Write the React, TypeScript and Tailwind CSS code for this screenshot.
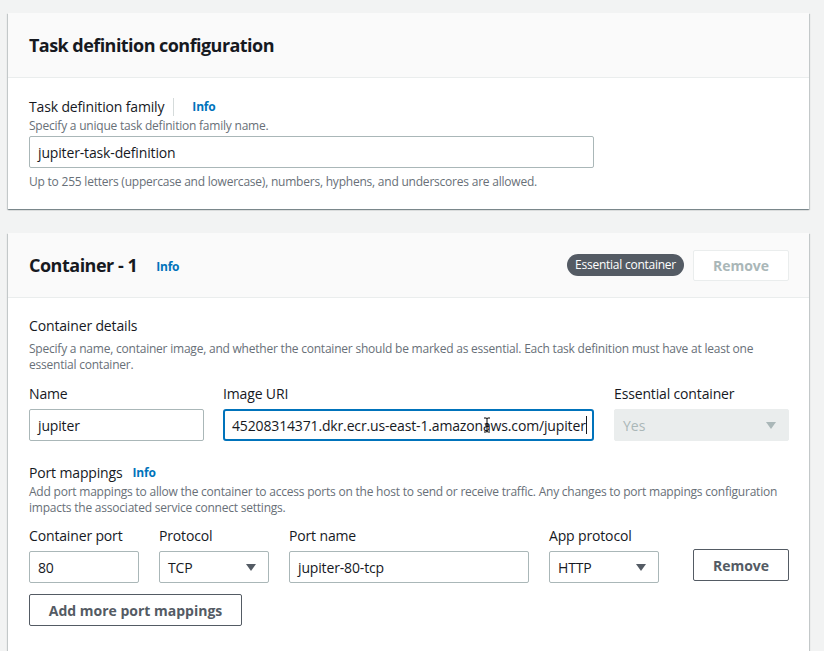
import React from "react";

const Caret = ({ color = "#545b64" }: { color?: string }) => (
  <svg width="10" height="7" viewBox="0 0 10 7" className="shrink-0">
    <polygon points="0,0 10,0 5,7" fill={color} />
  </svg>
);

const Info = ({ className = "" }: { className?: string }) => (
  <span className={"text-[12px] font-bold text-[#0073bb] tracking-[-0.2px] " + className}>Info</span>
);

const Label = ({ children }: { children: React.ReactNode }) => (
  <div className="text-[14px] leading-[22px] text-[#16191f] tracking-[-0.15px]">{children}</div>
);

const Desc = ({ children, className = "" }: { children: React.ReactNode; className?: string }) => (
  <div className={"text-[12px] leading-[16px] text-[#687078] tracking-[-0.22px] " + className}>{children}</div>
);

const TextInput = ({ value, w }: { value: string; w: string }) => (
  <div
    className={
      "h-[32px] border border-[#aab7b8] rounded-[2px] bg-white px-[8px] flex items-center text-[14px] text-[#16191f] tracking-[-0.15px] overflow-hidden whitespace-nowrap " +
      w
    }
  >
    {value}
  </div>
);

const SelectBox = ({ value, w }: { value: string; w: string }) => (
  <div
    className={
      "h-[32px] border border-[#aab7b8] rounded-[2px] bg-white pl-[8px] pr-[12px] flex items-center justify-between text-[14px] text-[#16191f] tracking-[-0.15px] " +
      w
    }
  >
    <span>{value}</span>
    <Caret />
  </div>
);

const cardShadow =
  "bg-white shadow-[0_1px_1px_0_rgba(0,28,36,0.3),1px_1px_1px_0_rgba(0,28,36,0.15),-1px_1px_1px_0_rgba(0,28,36,0.15)]";

export default function App() {
  return (
    <div className="w-[824px] h-[657px] bg-[#f2f3f3] flex flex-col font-['Open_Sans',sans-serif] overflow-hidden">
      <div className="flex-1 pt-[13px] pl-[8px] pr-[15px] flex flex-col gap-[24px] overflow-hidden">
        {/* Card 1 */}
        <div className={cardShadow}>
          <div className="h-[65px] bg-[#fafafa] border-b border-[#eaeded] px-[21px] flex items-center">
            <h2 className="text-[18px] font-bold text-[#16191f] leading-[24px] tracking-[-0.55px]">
              Task definition configuration
            </h2>
          </div>
          <div className="pl-[21px] pr-[20px] pt-[18px] pb-[19px]">
            <div className="flex items-center text-[14px] leading-[22px] text-[#16191f] tracking-[-0.15px]">
              <span>Task definition family</span>
              <span className="ml-[9px] w-px h-[18px] bg-[#d5dbdb]" />
              <Info className="ml-[18px]" />
            </div>
            <Desc>Specify a unique task definition family name.</Desc>
            <div className="mt-[2px]">
              <TextInput value="jupiter-task-definition" w="w-[565px]" />
            </div>
            <Desc className="mt-[6px]">
              Up to 255 letters (uppercase and lowercase), numbers, hyphens, and underscores are allowed.
            </Desc>
          </div>
        </div>

        {/* Card 2 */}
        <div className={"flex-1 " + cardShadow}>
          <div className="h-[65px] bg-[#fafafa] border-b border-[#eaeded] pl-[21px] pr-[20px] flex items-center justify-between">
            <div className="flex items-center">
              <h2 className="text-[18px] font-bold text-[#16191f] leading-[24px] tracking-[-0.5px]">Container - 1</h2>
              <Info className="ml-[19px] mt-[3px]" />
            </div>
            <div className="flex items-center gap-[9px]">
              <span className="h-[22px] px-[8px] rounded-full bg-[#545b64] text-white text-[12px] tracking-[-0.25px] flex items-center">
                Essential container
              </span>
              <button className="w-[96px] h-[31px] border border-[#eaeded] rounded-[2px] bg-white text-[14px] font-bold text-[#aab7b8]">
                Remove
              </button>
            </div>
          </div>
          <div className="pl-[21px] pr-[20px] pt-[17px]">
            <Label>Container details</Label>
            <Desc className="mt-[4px]">
              Specify a name, container image, and whether the container should be marked as essential. Each task definition must have at least one
              essential container.
            </Desc>
            <div className="mt-[10px] flex">
              <div className="w-[175px]">
                <Label>Name</Label>
                <div className="mt-[4px]">
                  <TextInput value="jupiter" w="w-[175px]" />
                </div>
              </div>
              <div className="w-[371px] ml-[19px]">
                <Label>Image URI</Label>
                <div className="mt-[4px] relative h-[32px] w-[371px] border-2 border-[#0073bb] rounded-[3px] bg-white pl-[7px] flex items-center text-[14px] text-[#16191f] tracking-[-0.15px] overflow-hidden whitespace-nowrap">
                  <span>45208314371.dkr.ecr.us-east-1.amazonaws.com/jupiter</span>
                  <span className="w-px h-[18px] bg-[#16191f] shrink-0" />
                  <svg width="8" height="16" viewBox="0 0 8 16" className="absolute left-[258px] top-[6px]">
                    <path
                      d="M1 1 H3 Q4 1 4 2 V14 Q4 15 3 15 H1 M7 1 H5 Q4 1 4 2 M4 14 Q4 15 5 15 H7 M2 8 H6"
                      stroke="#000"
                      strokeWidth="1"
                      fill="none"
                    />
                  </svg>
                </div>
              </div>
              <div className="w-[175px] ml-[20px]">
                <Label>Essential container</Label>
                <div className="mt-[4px] h-[32px] border border-[#eaeded] rounded-[2px] bg-[#eaeded] pl-[8px] pr-[12px] flex items-center justify-between text-[14px] text-[#aab7b8]">
                  <span>Yes</span>
                  <Caret color="#aab7b8" />
                </div>
              </div>
            </div>

            <div className="mt-[21px] flex items-center text-[14px] leading-[22px] text-[#16191f] tracking-[-0.15px]">
              <span>Port mappings</span>
              <Info className="ml-[10px]" />
            </div>
            <Desc>
              Add port mappings to allow the container to access ports on the host to send or receive traffic. Any changes to port mappings configuration
              impacts the associated service connect settings.
            </Desc>
            <div className="mt-[9px] flex items-end">
              <div className="w-[110px]">
                <Label>Container port</Label>
                <div className="mt-[4px]">
                  <TextInput value="80" w="w-[110px]" />
                </div>
              </div>
              <div className="w-[110px] ml-[20px]">
                <Label>Protocol</Label>
                <div className="mt-[4px]">
                  <SelectBox value="TCP" w="w-[110px]" />
                </div>
              </div>
              <div className="w-[240px] ml-[20px]">
                <Label>Port name</Label>
                <div className="mt-[4px]">
                  <TextInput value="jupiter-80-tcp" w="w-[240px]" />
                </div>
              </div>
              <div className="w-[110px] ml-[20px]">
                <Label>App protocol</Label>
                <div className="mt-[4px]">
                  <SelectBox value="HTTP" w="w-[110px]" />
                </div>
              </div>
              <button className="ml-auto mb-[2px] w-[96px] h-[32px] border border-[#545b64] rounded-[2px] bg-white text-[14px] font-bold text-[#545b64]">
                Remove
              </button>
            </div>
            <button className="mt-[11px] w-[213px] h-[32px] border border-[#545b64] rounded-[2px] bg-white text-[14px] font-bold text-[#545b64]">
              Add more port mappings
            </button>
          </div>
        </div>
      </div>
      <div className="h-[6px] bg-white" />
    </div>
  );
}
